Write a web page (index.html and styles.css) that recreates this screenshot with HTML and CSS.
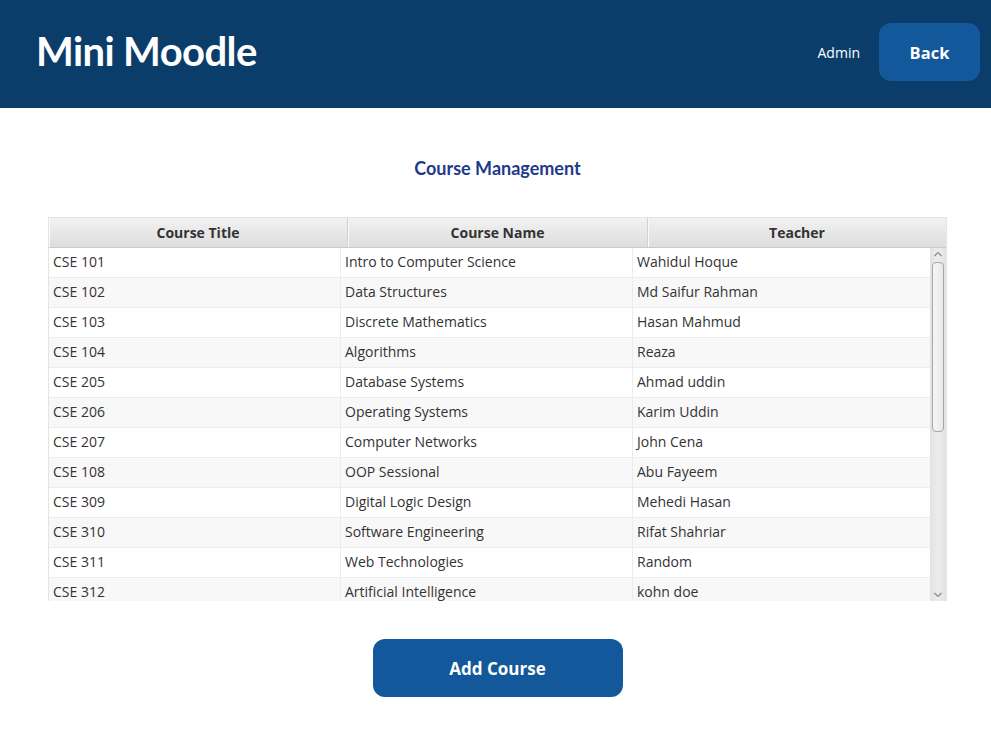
FILE: index.html
```html
<!DOCTYPE html>
<html>
<head>
<meta charset="utf-8">
<link rel="stylesheet" href="styles.css">
</head>
<body>
<header class="topbar">
  <h1 class="brand">Mini Moodle</h1>
  <div class="top-right">
    <span class="user">Admin</span>
    <button class="btn back">Back</button>
  </div>
</header>
<main class="content">
  <h2 class="page-title">Course Management</h2>
  <div class="table">
    <div class="thead">
      <div class="th">Course Title</div>
      <div class="th">Course Name</div>
      <div class="th">Teacher</div>
    </div>
    <div class="tbody-wrap">
      <div class="tbody">
        <div class="tr"><div class="td">CSE 101</div><div class="td">Intro to Computer Science</div><div class="td">Wahidul Hoque</div></div>
        <div class="tr"><div class="td">CSE 102</div><div class="td">Data Structures</div><div class="td">Md Saifur Rahman</div></div>
        <div class="tr"><div class="td">CSE 103</div><div class="td">Discrete Mathematics</div><div class="td">Hasan Mahmud</div></div>
        <div class="tr"><div class="td">CSE 104</div><div class="td">Algorithms</div><div class="td">Reaza</div></div>
        <div class="tr"><div class="td">CSE 205</div><div class="td">Database Systems</div><div class="td">Ahmad uddin</div></div>
        <div class="tr"><div class="td">CSE 206</div><div class="td">Operating Systems</div><div class="td">Karim Uddin</div></div>
        <div class="tr"><div class="td">CSE 207</div><div class="td">Computer Networks</div><div class="td">John Cena</div></div>
        <div class="tr"><div class="td">CSE 108</div><div class="td">OOP Sessional</div><div class="td">Abu Fayeem</div></div>
        <div class="tr"><div class="td">CSE 309</div><div class="td">Digital Logic Design</div><div class="td">Mehedi Hasan</div></div>
        <div class="tr"><div class="td">CSE 310</div><div class="td">Software Engineering</div><div class="td">Rifat Shahriar</div></div>
        <div class="tr"><div class="td">CSE 311</div><div class="td">Web Technologies</div><div class="td">Random</div></div>
        <div class="tr"><div class="td">CSE 312</div><div class="td">Artificial Intelligence</div><div class="td">kohn doe</div></div>
      </div>
      <div class="scrollbar">
        <svg class="arrow" width="16" height="12" viewBox="0 0 16 12"><path d="M4.5 8 L8 4.5 L11.5 8" fill="none" stroke="#8a8a8a" stroke-width="1.2"/></svg>
        <div class="track"><div class="thumb"></div></div>
        <svg class="arrow" width="16" height="12" viewBox="0 0 16 12"><path d="M4.5 4 L8 7.5 L11.5 4" fill="none" stroke="#8a8a8a" stroke-width="1.2"/></svg>
      </div>
    </div>
  </div>
  <div class="actions">
    <button class="btn add">Add Course</button>
  </div>
</main>
</body>
</html>
```
FILE: styles.css
```css
* { box-sizing: border-box; }
html, body { margin: 0; padding: 0; background: #ffffff; }
body { font-family: "Open Sans", "Noto Sans", sans-serif; color: #333; }

.topbar {
  height: 108px;
  background: #0b3d6b;
  display: flex;
  align-items: center;
  justify-content: space-between;
  padding: 0 11px 0 36px;
}
.brand {
  margin: 0;
  font-family: "Lato", "Open Sans", sans-serif;
  font-weight: 700;
  font-size: 40px;
  color: #ffffff;
  letter-spacing: -0.6px;
  position: relative;
  top: -3px;
}
.top-right { display: flex; align-items: center; gap: 19px; }
.user { color: #ffffff; font-size: 14px; position: relative; top: -2px; }
.btn {
  border: none;
  color: #ffffff;
  background: #12589a;
  font-family: "Open Sans", "Noto Sans", sans-serif;
  font-weight: 700;
  cursor: pointer;
}
.back {
  width: 101px;
  height: 58px;
  border-radius: 12px;
  font-size: 16.5px;
  position: relative;
  top: -2px;
}

.content { padding: 0 44px 0 48px; }
.page-title {
  margin: 0;
  padding-top: 49px;
  height: 109px;
  text-align: center;
  font-family: "Lato", "Open Sans", sans-serif;
  font-size: 18px;
  font-weight: 700;
  color: #1e3a8a;
  line-height: 22px;
}

.table {
  width: 899px;
  border: 1px solid #e4e4e4;
  border-bottom: none;
  background: #fff;
}
.thead {
  display: grid;
  grid-template-columns: 299px 300px 1fr;
  height: 30px;
  background: linear-gradient(#f2f2f2, #dddddd);
  border-bottom: 1px solid #c9c9c9;
}
.th {
  display: flex;
  align-items: center;
  justify-content: center;
  font-weight: 700;
  font-size: 14px;
  color: #333;
  border-right: 1px solid #d0d0d0;
  box-shadow: inset 1px 0 0 #fafafa;
}
.th:last-child { border-right: none; }

.tbody-wrap {
  display: flex;
  height: 353px;
  overflow: hidden;
}
.tbody { flex: 1; }
.tr {
  display: grid;
  grid-template-columns: 292px 292px 1fr;
  height: 30px;
  background: #ffffff;
  border-bottom: 1px solid #ececec;
}
.tr:nth-child(even) { background: #f8f8f8; }
.td {
  display: flex;
  align-items: center;
  padding-left: 4px;
  padding-bottom: 2px;
  font-size: 14px;
  color: #333;
  border-right: 1px solid #ececec;
  white-space: nowrap;
}
.td:last-child { border-right: none; }

.scrollbar {
  width: 16px;
  background: linear-gradient(90deg, #e2e2e2, #ececec 50%, #e2e2e2);
  display: flex;
  flex-direction: column;
  height: 353px;
}
.arrow { display: block; flex: none; }
.track { flex: 1; padding: 2px 2px; }
.thumb {
  height: 170px;
  border: 1px solid #a5a5a5;
  border-radius: 4px;
  background: linear-gradient(90deg, #f6f6f6, #e8e8e8);
}

.actions {
  display: flex;
  justify-content: center;
  padding-top: 38px;
}
.add {
  width: 250px;
  height: 58px;
  border-radius: 12px;
  font-size: 17px;
}
```
